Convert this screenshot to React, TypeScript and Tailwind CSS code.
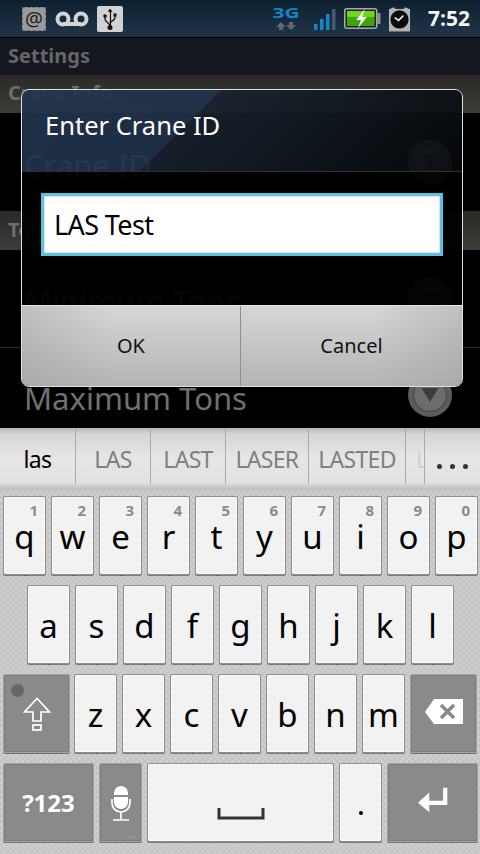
import React from 'react';

const row1 = [['q', '1'], ['w', '2'], ['e', '3'], ['r', '4'], ['t', '5'], ['y', '6'], ['u', '7'], ['i', '8'], ['o', '9'], ['p', '0']];
const row2 = ['a', 's', 'd', 'f', 'g', 'h', 'j', 'k', 'l'];
const row3 = ['z', 'x', 'c', 'v', 'b', 'n', 'm'];

const lightKey = 'relative flex items-center justify-center bg-[#f2f2f2] border border-[#fafafa] rounded-[1px] shadow-[0_0_0_1px_#8f8f8f,0_1px_0_1px_#7a7a7a] text-black';
const darkKey = 'relative flex items-center justify-center bg-[#8a8a8a] border border-[#7c7c7c] rounded-[1px] shadow-[0_0_0_1px_#a5a5a5,0_1px_0_1px_#707070] text-white';

const Letter: React.FC<{ ch: string; hint?: string }> = ({ ch, hint }) => (
  <div className={`${lightKey} w-[41px] h-[77px]`}>
    {hint && <span className="absolute right-[6px] top-[0px] text-[15px] leading-[24px] font-bold text-[#8b8b8b]">{hint}</span>}
    <span className="text-[33px] leading-none mt-[2px]">{ch}</span>
    <span className="absolute -bottom-[3px] left-1/2 w-px h-px bg-[#333]" />
  </div>
);

const Spinner: React.FC = () => (
  <svg viewBox="0 0 46 46" className="w-[46px] h-[46px]">
    <circle cx="23" cy="23" r="22" fill="#5c5c5c" />
    <circle cx="23" cy="23" r="16.5" fill="#6c6c6c" stroke="#4d4d4d" strokeWidth="1.5" />
    <path d="M14.500 16h17L23 30z" fill="#3c3c3c" />
  </svg>
);

const Header: React.FC<{ label: string }> = ({ label }) => (
  <div className="h-[38px] bg-[linear-gradient(#2a2a26,#3c3c38)] flex items-center pl-[8px] pb-[2px] text-[20px] font-bold text-[#6e6e6e]">{label}</div>
);

const Item: React.FC<{ label: string; h: string; border?: boolean }> = ({ label, h, border }) => (
  <div className={`${h} flex items-center justify-between pl-[24px] pr-[27px] ${border ? 'border-b border-[#2c2c2c]' : ''}`}>
    <span className="text-[31px] text-[#707070] mt-[6px]">{label}</span>
    <Spinner />
  </div>
);

const StatusBar: React.FC = () => (
  <div className="h-[38px] bg-[linear-gradient(#0c2030,#21354a)] border-b border-black flex items-center">
    {/* notification icons */}
    <div className="flex items-center ml-[22px]">
      <div className="w-[24px] h-[24px] bg-[#9a9a9a] border border-dashed border-[#6a6a6a] flex items-center justify-center text-[20px] leading-none text-[#222]">@</div>
      <svg viewBox="0 0 34 16" className="w-[34px] h-[16px] ml-[9px]">
        <circle cx="8" cy="8" r="5.5" fill="none" stroke="#d4d4d4" strokeWidth="4" />
        <circle cx="26" cy="8" r="5.5" fill="none" stroke="#d4d4d4" strokeWidth="4" />
        <rect x="8" y="11" width="18" height="4" fill="#d4d4d4" />
      </svg>
      <div className="w-[26px] h-[26px] bg-[#d2d2d2] rounded-[2px] ml-[8px]">
        <svg viewBox="0 0 26 26" className="w-[26px] h-[26px]">
          <path d="M12.5 3h1l2 3h-1.4v14h-1.2V6H11z" fill="#111" />
          <path d="M13 20c0-3-5-3.5-5-7v-2M13 17c0-2 5-2 5-5.500V10" fill="none" stroke="#111" strokeWidth="1.300" />
          <circle cx="8" cy="10" r="1.800" fill="#111" />
          <rect x="16.500" y="7.500" width="3" height="3" fill="#111" />
          <circle cx="13" cy="21.500" r="2.500" fill="#111" />
        </svg>
      </div>
    </div>
    <div className="flex-1" />
    {/* 3G */}
    <div className="flex flex-col items-center w-[28px] -mt-[1px]">
      <span className="text-[14px] leading-[13px] font-bold text-[#0f87c8] scale-x-[1.5]">3G</span>
      <svg viewBox="0 0 20 10" className="w-[20px] h-[10px] mt-[2px]">
        <path d="M5 1l5 5H7v3H3V6H0zM15 9l5-5h-3V1h-4v3h-3z" fill="#5b6a76" />
      </svg>
    </div>
    <svg viewBox="0 0 22 22" className="w-[22px] h-[22px] ml-[14px] mt-[3px]">
      <rect x="0" y="15" width="3.500" height="6" fill="#0f87c8" />
      <rect x="6" y="10" width="3.500" height="11" fill="#0f87c8" />
      <rect x="12" y="5" width="3.500" height="16" fill="#0f87c8" />
      <rect x="18" y="0" width="3.500" height="21" fill="#4a5a68" />
    </svg>
    <svg viewBox="0 0 37 22" className="w-[37px] h-[22px] ml-[8px]">
      <rect x="0.750" y="0.750" width="32" height="19.500" rx="2" fill="#222" stroke="#a8a8a8" strokeWidth="1.500" />
      <rect x="3" y="3" width="27.500" height="15" fill="#3fa30c" />
      <rect x="3" y="3" width="27.500" height="6" fill="#6fd61c" />
      <rect x="33" y="5" width="3.500" height="11" fill="#8e8e8e" />
      <path d="M21 1l-9 11h5l-3 8 9-11h-5z" fill="#fff" />
    </svg>
    <svg viewBox="0 0 24 28" className="w-[23px] h-[27px] ml-[7px]">
      <path d="M1 7a5 5 0 0 1 7-4zM23 7a5 5 0 0 0-7-4z" fill="#b5b5b5" />
      <rect x="1" y="4" width="22" height="23.500" fill="#b5b5b5" />
      <circle cx="12" cy="15" r="9.500" fill="#0c0c0c" />
      <path d="M7 13l4 3 5-5" fill="none" stroke="#eee" strokeWidth="1.600" />
    </svg>
    <span className="text-[21px] font-bold text-[#f4f4f4] ml-[17px] mr-[10px] leading-none">7:52</span>
  </div>
);

const Dialog: React.FC = () => (
  <div className="absolute left-[21px] top-[89px] w-[442px] h-[298px] rounded-[8px] border border-[#e0e0e0] overflow-hidden flex flex-col">
    <div className="h-[82px] border-b border-[#2d3136] bg-[linear-gradient(135deg,rgba(34,52,76,0.92)_0%,rgba(32,50,74,0.92)_38%,rgba(24,34,46,0.92)_38.300%,rgba(6,8,11,0.92)_100%)] flex items-center pl-[23px] pb-[10px]">
      <span className="text-[25.500px] text-white">Enter Crane ID</span>
    </div>
    <div className="flex-1 bg-black/95 px-[19px] pt-[21px]">
      <div className="h-[63px] bg-white border-[3px] border-[#55c5df] shadow-[inset_0_0_2px_#999] flex items-center pl-[10px]">
        <span className="text-[27px] tracking-[-0.6px] text-black mt-[1px]">LAS Test</span>
      </div>
    </div>
    <div className="h-[81px] border-t border-[#e4e4e4] flex bg-[linear-gradient(90deg,rgba(150,150,150,0.35),rgba(150,150,150,0)_20%,rgba(150,150,150,0)_80%,rgba(150,150,150,0.35)),linear-gradient(#d6d6d6,#b4b4b4)] relative">
      <div className="w-[218px] flex items-center justify-center text-[20px] text-[#111]">OK</div>
      <div className="w-px bg-[#8e8e8e]" />
      <div className="flex-1 flex items-center justify-center text-[20px] text-[#111]">Cancel</div>
    </div>
  </div>
);

const Candidates: React.FC = () => (
  <div className="h-[62px] bg-[linear-gradient(#b5b5b5_0px,#d6d6d6_6px,#e6e6e6_30px,#e2e2e2_54px,#bdbdbd_62px)] flex text-[23px] tracking-[-0.7px] text-[#808080] pb-[6px]">
    <div className="w-[76px] flex items-center justify-center pt-[6px] border-r border-[#aaaaaa] text-black">las</div>
    <div className="w-[75px] flex items-center justify-center pt-[6px] border-r border-[#aaaaaa]">LAS</div>
    <div className="w-[75px] flex items-center justify-center pt-[6px] border-r border-[#aaaaaa]">LAST</div>
    <div className="w-[83px] flex items-center justify-center pt-[6px] border-r border-[#aaaaaa]">LASER</div>
    <div className="w-[97px] flex items-center justify-center pt-[6px] border-r border-[#aaaaaa]">LASTED</div>
    <div className="w-[19px] flex items-center pl-[10px] pt-[6px] border-r border-[#aaaaaa] text-[#d0d0d0] overflow-hidden">L</div>
    <div className="flex-1 flex items-center justify-center gap-[8px] pt-[20px]">
      <span className="w-[5px] h-[5px] rounded-full bg-[#333]" />
      <span className="w-[5px] h-[5px] rounded-full bg-[#333]" />
      <span className="w-[5px] h-[5px] rounded-full bg-[#333]" />
    </div>
  </div>
);

const Keyboard: React.FC = () => (
  <div className="h-[426px]">
    <Candidates />
    <div className="h-[364px] bg-[#c9c9c9] bg-[repeating-conic-gradient(#cdcdcd_0_25%,#c5c5c5_0_50%)] bg-[length:6px_6px] pt-[7px] pl-[4px] flex flex-col gap-[12px]">
      <div className="flex gap-[7px]">
        {row1.map(([c, h]) => <Letter key={c} ch={c} hint={h} />)}
      </div>
      <div className="flex gap-[7px] pl-[24px]">
        {row2.map((c) => <Letter key={c} ch={c} />)}
      </div>
      <div className="flex gap-[7px]">
        <div className={`${darkKey} w-[65px] h-[77px]`}>
          <span className="absolute left-[6px] top-[8px] w-[13px] h-[13px] rounded-full bg-[#666]" />
          <svg viewBox="0 0 28 34" className="w-[28px] h-[34px]">
            <path d="M14 1.500L1.500 15H10v9h8v-9h8.500z" fill="none" stroke="#fff" strokeWidth="1.700" />
            <rect x="10" y="28" width="8" height="5" fill="none" stroke="#fff" strokeWidth="1.700" />
          </svg>
        </div>
        <div className="flex gap-[7px] -ml-px">
          {row3.map((c) => <Letter key={c} ch={c} />)}
        </div>
        <div className={`${darkKey} w-[65px] h-[77px]`}>
          <svg viewBox="0 0 38 26" className="w-[38px] h-[26px] -mt-[4px]">
            <path d="M9 0h29v25H9L0 13z" fill="#fff" />
            <path d="M16 6l13 13M29 6L16 19" stroke="#8a8a8a" strokeWidth="3.500" />
          </svg>
        </div>
      </div>
      <div className="flex gap-[7px]">
        <div className={`${darkKey} w-[89px] h-[77px] text-[24px] font-bold`}>?123</div>
        <div className={`${darkKey} w-[41px] h-[77px]`}>
          <svg viewBox="0 0 20 36" className="w-[20px] h-[36px]">
            <path d="M3 8a7 7 0 0 1 14 0v2H3zM3 12h14v5a7 7 0 0 1-14 0z" fill="#fff" />
            <path d="M1 14v4a9 9 0 0 0 18 0v-4M10 27v7M2 35h16" fill="none" stroke="#fff" strokeWidth="1.700" />
          </svg>
          <span className="absolute right-[5px] bottom-[1px] text-[10px] leading-none text-[#b5b5b5] tracking-[1px]">...</span>
        </div>
        <div className={`${lightKey} w-[185px] h-[77px]`}>
          <svg viewBox="0 0 48 14" className="w-[48px] h-[14px] mt-[22px]">
            <path d="M2 1v10h44V1" fill="none" stroke="#333" strokeWidth="3" />
          </svg>
        </div>
        <div className={`${lightKey} w-[41px] h-[77px]`}>
          <span className="w-[4px] h-[4px] rounded-full bg-black mt-[20px]" />
        </div>
        <div className={`${darkKey} w-[89px] h-[77px]`}>
          <svg viewBox="0 0 32 28" className="w-[30px] h-[28px] -mt-[5px]">
            <path d="M29 1v16H11" fill="none" stroke="#fff" strokeWidth="4.500" />
            <path d="M12 6L0 17l12 10z" fill="#fff" />
          </svg>
        </div>
      </div>
    </div>
  </div>
);

const App: React.FC = () => (
  <div className="relative w-[480px] h-[854px] bg-black overflow-hidden font-['Noto_Sans',sans-serif]">
    <StatusBar />
    <div className="h-[390px] overflow-hidden">
      <div className="h-[37px] bg-[#14171f] flex items-center pl-[8px] pb-[1px] text-[20px] font-bold text-[#666666]">Settings</div>
      <Header label="Crane Info" />
      <Item label="Crane ID" h="h-[99px]" border />
      <Header label="Tons" />
      <Item label="Minimum Tons" h="h-[98px]" border />
      <Item label="Maximum Tons" h="h-[94px]" />
    </div>
    <Dialog />
    <Keyboard />
  </div>
);

export default App;
